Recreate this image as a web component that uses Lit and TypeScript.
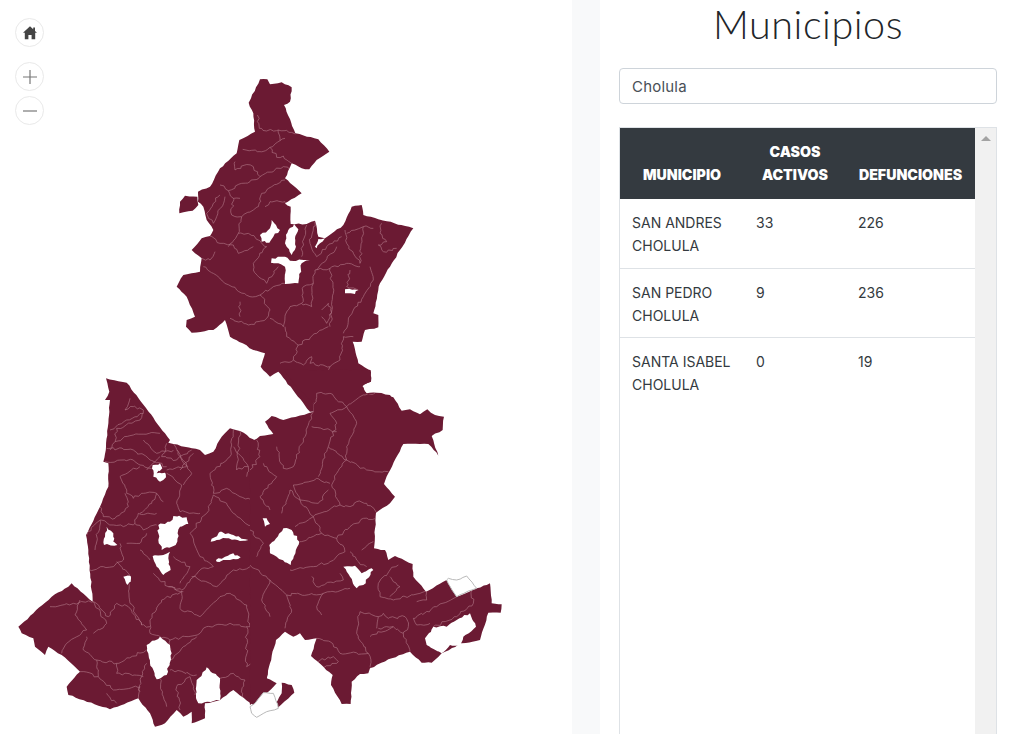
import { LitElement, html, css, svg } from "lit";
import { customElement } from "lit/decorators.js";

type Pts = number[];

let seed = 7;
function rnd() {
  seed = (seed * 16807) % 2147483647;
  return seed / 2147483647 - 0.5;
}
function wobble(p: Pts, closed: boolean, step: number, amp: number) {
  const pts = closed ? [...p, p[0], p[1]] : p;
  const out: string[] = [];
  for (let i = 0; i + 3 < pts.length; i += 2) {
    const dx = pts[i + 2] - pts[i];
    const dy = pts[i + 3] - pts[i + 1];
    const n = Math.max(1, Math.round(Math.hypot(dx, dy) / step));
    for (let k = 0; k < n; k++) {
      const t = k / n;
      const a = k === 0 ? 0 : amp;
      out.push((pts[i] + dx * t + rnd() * a).toFixed(1) + "," + (pts[i + 1] + dy * t + rnd() * a).toFixed(1));
    }
  }
  if (!closed) out.push(p[p.length - 2] + "," + p[p.length - 1]);
  return out.join(" ");
}

const NORTH: Pts[] = [
  [270,28,292,28,300,43,335,37,365,52,360,95,342,105,376,190,445,208,478,245,440,270,418,298,395,295,365,280,345,325,395,370,345,400,362,410,362,462,410,462,435,452,445,500,465,505,520,465,545,410,575,405,580,435,730,475,690,540,660,590,630,640,610,730,625,735,625,772,585,780,575,815,548,815,565,880,603,905,603,935,575,950,590,970,620,968,660,975,695,1025,420,1025,325,905,300,920,272,890,285,850,250,840,218,820,180,800,165,750,130,780,65,788,48,770,50,750,75,740,50,680,20,650,40,615,90,605,95,565,65,540,95,505,120,498,130,480,110,450,100,410,84,395,84,365,120,350,150,295,200,250,208,210,255,185,250,130,236,98],
  [28,430,30,395,45,377,82,380,85,405,68,422],
];
const SOUTH_W: Pts = [318,25,380,38,510,210,505,218,520,222,600,240,615,255,640,245,665,200,690,175,720,183,770,215,800,215,800,1000,760,1005,700,960,660,990,615,1000,615,1045,575,1060,575,1025,550,1040,530,1020,495,1060,465,1070,450,1030,415,985,330,1018,205,975,200,950,240,905,185,855,145,830,135,855,105,830,100,805,65,790,55,770,100,730,155,680,205,650,215,640,278,695,265,540,258,495,300,410,325,350,325,280,310,275,318,230,330,90,315,90,328,65];
const SOUTH_E: Pts[] = [
  [0,218,30,198,70,192,45,155,65,138,100,150,175,130,190,125,190,98,130,40,100,0,362,0,362,35,335,45,350,72,375,70,430,82,455,122,480,118,510,133,532,118,555,135,582,140,578,180,545,198,565,257,535,222,460,222,415,310,402,342,435,380,420,400,378,428,372,535,405,540,415,570,435,558,488,582,490,620,528,665,590,630,620,680,680,655,720,640,725,700,755,703,752,728,715,728,690,810,635,820,575,850,545,878,515,878,480,845,415,868,360,895,355,910,330,912,305,935,302,1002,275,1002,243,945,248,915,183,858,200,805,165,810,150,790,130,800,105,785,78,810,60,880,50,925,80,940,55,965,0,1005],
  [95,938,125,945,133,968,85,1012,75,1005,95,970],
];

const NORTH_HOLES: Pts[] = [
  [270,495,300,475,305,450,318,465,330,480,310,500,298,518,275,515],
  [345,520,355,480,372,462,385,478,375,505,378,530,365,555,350,530],
  [305,565,345,560,360,572,420,570,395,580,385,640,345,642,345,590,325,580,303,578],
  [525,658,565,660,555,672,525,670],
  [435,530,445,507,465,505,450,520,440,535],
];
const SOUTH_W_HOLES: Pts[] = [
  [458,285,480,280,487,295,470,310,495,308,498,322,480,335,460,320],
  [475,465,510,455,520,438,560,442,565,462,540,470,527,525,485,540,475,510],
  [458,558,490,555,510,545,505,565,512,600,490,615,470,590],
  [315,500,320,470,340,490,340,515,352,525,312,525],
  [370,620,392,618,392,635,382,645],
  [632,515,660,485,700,495,745,510,720,513,680,505,650,510],
  [648,570,700,550,722,562,690,570,650,575],
  [440,825,480,800,510,825,515,850,500,915,470,928,450,880],
  [590,990,590,930,620,892,660,925,660,990,595,1000],
];
const SOUTH_E_HOLES: Pts[] = [
  [38,445,50,445,60,462,45,470],
  [58,525,100,475,125,480,148,515,122,585,80,560,60,550],
  [280,590,315,587,335,610,365,595,370,600,340,645,320,655,300,620],
  [525,805,550,770,590,770,620,750,660,730,678,770,640,800,635,830,600,825,575,850,530,825],
];
const OUTLINED: Pts[] = [
  [590,630,595,625,620,630,650,618,680,655,665,660,620,680],
  [0,1010,15,1000,40,968,70,970,85,1015,50,1025,20,1042,5,1030],
];

const NORTH_LINES: Pts[] = [
  [262,135,268,175,290,183,325,180,345,182,376,192],[325,180,330,212,300,232,270,245,218,238],[300,232,320,262,340,258,365,280],[330,212,345,205],
  [195,300,225,285,250,290,270,320,340,290,360,300],[195,300,195,275],[150,345,175,362,215,340,240,335,270,320],[175,362,190,385,210,385],
  [150,375,130,400,110,430,130,460],[165,380,140,440,130,460],[190,385,185,435,215,440,250,420,265,410,275,370,305,350,345,330],[285,410,300,395,345,395,362,410],
  [215,440,205,490,175,530],[205,490,235,490,265,510,290,530,250,580],[120,498,150,520,190,525,205,550,250,530],[250,580,250,600,290,640,325,590],
  [95,565,120,570,135,545],[100,590,130,610,160,635,200,660,240,680,270,675,310,650,345,640],[270,675,300,720,290,745,235,765,180,745],[210,695,210,740],
  [300,745,340,770,345,740,360,710,395,700],[345,770,350,800,385,825,440,790,475,770],[385,825,370,870,400,885,425,860,420,880,480,890,510,870,520,800,550,800],[370,870,330,880],
  [395,700,400,650,430,640,435,600],[395,700,425,710,430,640],[435,600,480,595,530,580,570,590],[480,595,490,670,480,770],[530,490,580,470,610,475],
  [525,480,530,520,550,550,570,580,580,470],[635,460,630,490,650,515,625,525,640,545,680,535],[600,590,610,630,580,680,550,720,520,790],[540,600,530,650,565,660],
  [455,720,475,700,485,730,470,760,455,740],[440,960,470,980,510,985,520,1020],[480,890,465,905,490,925,445,960,430,1000],[520,1000,570,975],
  [410,465,400,510,395,560],[435,455,420,520,440,560,470,530,515,500],[500,530,440,600],
];
const SW_LINES: Pts[] = [
  [390,85,375,120,400,110,430,120,420,150,350,175,345,215,400,195,480,190],[330,180,380,150,430,130],[320,235,400,240,450,270,500,290],[315,275,400,270,420,285,455,295],
  [360,320,420,290],[360,320,380,370,400,385,430,370,470,370,490,395],[500,220,485,260,530,270,575,240],[520,220,545,270,575,310,550,345],[500,310,545,345,530,400,540,425,600,430],
  [300,410,310,440,345,445,385,410,375,370],[260,495,300,450,340,465,370,470,405,460,415,430,470,430],[300,450,285,540],[405,460,430,480,470,465],[380,520,420,520,440,490],
  [360,520,370,570,340,590,310,590,270,600],[420,540,450,570],[350,575,385,610,390,700,425,765,450,770],[460,610,505,650,550,665],[505,650,545,660,600,600,640,590,600,560,570,490,620,430],
  [620,430,640,375,680,400,700,430,765,480],[630,310,640,370,680,355,720,380,780,400],[630,310,690,260,700,180],[720,183,710,300,745,290,740,320],
  [545,665,485,690,450,750,450,790,510,810,600,790,620,770,690,760,750,770],[545,665,540,715,600,740],[600,740,660,680,690,670,740,705,750,770],[650,650,700,600,780,590],[575,620,650,650],
  [150,710,220,700,280,695,320,760,280,790],[240,690,225,735,260,780,200,820,185,850],[280,695,325,740,350,700,385,710,425,765],[260,800,250,840,290,870,350,880,440,840],
  [290,870,295,920,240,905],[295,920,340,960,420,950,420,965],[320,970,350,1000],[350,880,350,910,430,920],[440,880,425,920,415,985],[480,925,490,980,500,1010],[510,900,590,915],
  [510,810,510,870,550,830,590,800],[530,950,570,920,585,975],[530,950,540,1020],[660,925,700,910,735,930,720,1000],[740,890,740,770],[740,890,780,860],
  [345,215,330,240],[430,210,470,250,520,240],[530,240,560,290,500,300],[440,300,480,260],[540,300,580,250],[470,370,455,400,420,430],[700,230,745,290],[520,560,570,590,540,640],
];
const SE_LINES: Pts[] = [
  [200,70,240,70,290,110,330,80,375,70],[200,70,190,125,160,205,130,290,100,295,80,230],[290,110,240,130,260,160,235,230,205,320],[185,170,260,185],[290,110,320,160,290,230,290,270],
  [235,230,290,270,350,300,415,305],[290,270,260,310,245,345],[130,345,200,325,240,340],[130,345,150,390,205,400,235,360],[245,345,270,405,300,410,320,395,350,400,380,428],
  [270,405,190,440,120,360],[95,430,120,360],[190,440,175,450,135,470],[190,440,215,490,260,505,285,545],[260,505,300,470,340,445,378,445],[150,515,215,490],[335,540,370,515],
  [285,545,240,575,190,590,160,595,120,600],[300,545,320,570,350,590],[60,630,110,675,220,670,200,710,215,735],[110,675,125,720,105,775],[60,630,35,690,60,740],[185,620,200,650,280,630,270,610],
  [220,670,300,655],[0,585,60,630],[330,725,320,790,355,850,365,895],[330,725,385,740,380,775],[355,850,270,850,240,815,200,805],[200,875,250,860,265,875,215,895],
  [385,740,400,730,415,745,465,740,475,770,460,790,480,845],[460,790,430,770,385,775],[360,800,430,770],[390,680,430,690,510,670,530,665],[390,680,385,640,420,600,445,585],[420,620,450,650,420,680],
  [490,745,560,710,620,680,665,660,670,700,620,740,550,770],[490,745,500,765,540,760],[530,665,530,690,500,695],[20,210,30,260,0,300],[40,280,80,320,30,380,60,420],[0,480,40,520,20,560],
];

const RIGHT_ROWS = [
  ["SAN ANDRES CHOLULA", "33", "226"],
  ["SAN PEDRO CHOLULA", "9", "236"],
  ["SANTA ISABEL CHOLULA", "0", "19"],
];

@customElement("app-root")
export class AppRoot extends LitElement {
  static styles = css`
    :host {
      display: grid;
      grid-template-columns: 572px 28px 1fr;
      height: 100vh;
      overflow: hidden;
      background: #fff;
      font-family: "Inter", "Liberation Sans", sans-serif;
      color: #212529;
    }
    .map { position: relative; overflow: hidden; }
    .map svg.canvas { display: block; width: 572px; height: 734px; }
    .land { fill: #6b1a33; stroke: none; }
    .hole { fill: #fff; stroke: none; }
    .outlined { fill: #fff; stroke: #b9b9b9; stroke-width: 1; vector-effect: non-scaling-stroke; }
    .line { fill: none; stroke: #b57c8c; stroke-width: 0.6; vector-effect: non-scaling-stroke; }
    .ctl {
      position: absolute; left: 15px; width: 29px; height: 29px; box-sizing: border-box;
      border: 1px solid #e9e9e9; border-radius: 50%; background: #fff;
      display: flex; align-items: center; justify-content: center;
    }
    .home { top: 18px; }
    .plus { top: 62px; }
    .minus { top: 96px; }
    .gutter { background: #f8f9fa; }
    .side { padding: 0 14px 0 19px; display: flex; flex-direction: column; min-height: 0; }
    h1 {
      margin: 0; height: 68px; text-align: center;
      font: 300 39.5px/47px "Lato", "Open Sans", sans-serif; letter-spacing: 0.55px; color: #212529;
    }
    .search {
      box-sizing: border-box; height: 36px; flex: none; border: 1px solid #ced4da; border-radius: 4px;
      padding: 0 12px; display: flex; align-items: center;
      font-size: 15px; color: #495057; letter-spacing: 0.2px;
    }
    .box {
      margin-top: 23px; flex: 1; min-height: 0; display: flex;
      border: 1px solid #dee2e6; border-bottom: none; overflow: hidden;
    }
    table { width: 355px; flex: none; border-collapse: collapse; table-layout: fixed; align-self: flex-start; font-size: 14px; }
    th {
      background: #343a40; color: #fff; font-weight: 900; line-height: 23px; padding: 12px 0 13px;
      vertical-align: bottom; text-align: center; font-size: 14.2px;
    }
    td { padding: 12px 12px 10px; line-height: 23px; vertical-align: top; border-top: 1px solid #dee2e6; color: #343a40; }
    tr:first-child td { border-top: none; padding-bottom: 11px; }
    .c1 { width: 124px; } .c2 { width: 102px; } .c3 { width: 129px; }
    .bar { flex: 1; background: #f1f1f1; display: flex; justify-content: center; padding-top: 8px; }
    .arrow { width: 0; height: 0; border: 5px solid transparent; border-top: none; border-bottom: 5px solid #a3a3a3; }
  `;

  private group(id: string, tx: number, ty: number, land: Pts[], holes: Pts[], lines: Pts[], outlined: Pts[] = []) {
    const shapes = land.map((p) => wobble(p, true, 12, 3));
    return svg`<g transform="translate(${tx} ${ty}) scale(0.33333)">
      <clipPath id=${id}>${shapes.map((s) => svg`<polygon points=${s}></polygon>`)}</clipPath>
      ${shapes.map((s) => svg`<polygon class="land" points=${s}></polygon>`)}
      <g clip-path=${`url(#${id})`}>
        ${lines.map((p) => svg`<polyline class="line" points=${wobble(p, false, 9, 8)}></polyline>`)}
      </g>
      ${holes.map((p) => svg`<polygon class="hole" points=${wobble(p, true, 9, 6)}></polygon>`)}
      ${outlined.map((p) => svg`<polygon class="outlined" points=${wobble(p, true, 12, 3)}></polygon>`)}
    </g>`;
  }

  render() {
    seed = 7;
    return html`
      <div class="map">
        <svg class="canvas" viewBox="0 0 572 734">
          ${this.group("cn", 170, 70, NORTH, NORTH_HOLES, NORTH_LINES)}
          ${this.group("cw", 0, 370, [SOUTH_W], SOUTH_W_HOLES, SW_LINES)}
          ${this.group("ce", 250, 370, SOUTH_E, SOUTH_E_HOLES, SE_LINES, OUTLINED)}
        </svg>
        <div class="ctl home">
          <svg width="16" height="16" viewBox="0 0 16 16"><path d="M8 1.2 L11.2 4.2 V2.4 H13 V5.9 L15 7.8 H13.2 V14.2 H9.6 V10 H6.4 V14.2 H2.8 V7.8 H1 Z" fill="#444"></path></svg>
        </div>
        <div class="ctl plus">
          <svg width="16" height="16" viewBox="0 0 16 16"><path d="M1 8 H15 M8 1 V15" stroke="#777" stroke-width="1.2" fill="none"></path></svg>
        </div>
        <div class="ctl minus">
          <svg width="16" height="16" viewBox="0 0 16 16"><path d="M1 8 H15" stroke="#777" stroke-width="1.2" fill="none"></path></svg>
        </div>
      </div>
      <div class="gutter"></div>
      <div class="side">
        <h1>Municipios</h1>
        <div class="search">Cholula</div>
        <div class="box">
          <table>
            <thead>
              <tr>
                <th class="c1">MUNICIPIO</th>
                <th class="c2">CASOS<br />ACTIVOS</th>
                <th class="c3">DEFUNCIONES</th>
              </tr>
            </thead>
            <tbody>
              ${RIGHT_ROWS.map((r) => html`<tr>${r.map((c) => html`<td>${c}</td>`)}</tr>`)}
            </tbody>
          </table>
          <div class="bar"><div class="arrow"></div></div>
        </div>
      </div>
    `;
  }
}
